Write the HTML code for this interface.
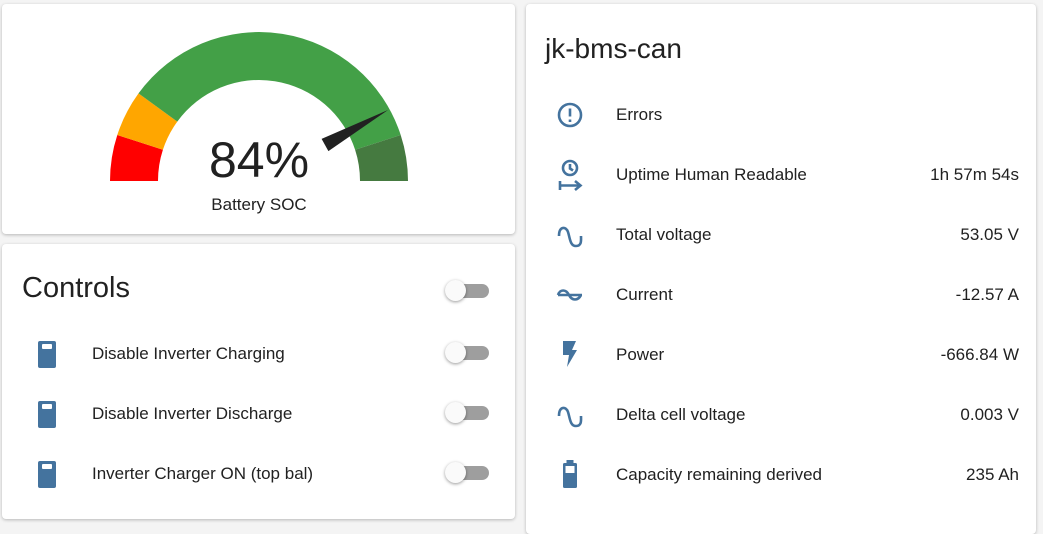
<!DOCTYPE html>
<html><head><style>
body{margin:0;width:1043px;height:523px;background:#f4f4f4;font-family:"Liberation Sans",Roboto,sans-serif;color:#212121;overflow:hidden;position:relative}
.card{position:absolute;background:#fff;border-radius:4px;box-shadow:0 1px 3px rgba(0,0,0,.25)}
.t{position:absolute;font-size:17px;white-space:nowrap}
.tog{position:absolute;width:46px;height:24px}
.tog .tr{position:absolute;left:10px;top:5px;width:34px;height:14px;border-radius:7px;background:#9e9e9e}
.tog .kn{position:absolute;left:0;top:1px;width:21px;height:21px;border-radius:50%;background:#fafafa;box-shadow:0 1px 3px rgba(0,0,0,.4)}
.r{position:absolute;right:24px;font-size:17px}
svg.i{position:absolute}
</style></head><body>
<div class="card" style="left:2px;top:4px;width:513px;height:230px"></div>
<div class="card" style="left:2px;top:244px;width:513px;height:275px"></div>
<div class="card" style="left:526px;top:4px;width:510px;height:530px"></div>
<svg style="position:absolute;left:0;top:0" width="520" height="240">
<path d="M110 181 A149 149 0 0 1 117.3 135 L162.9 149.8 A101 101 0 0 0 158 181Z" fill="#ff0000"/>
<path d="M117.3 135 A149 149 0 0 1 138.5 93.4 L177.3 121.6 A101 101 0 0 0 162.9 149.8Z" fill="#ffa600"/>
<path d="M138.5 93.4 A149 149 0 0 1 400.7 135 L355.1 149.8 A101 101 0 0 0 177.3 121.6Z" fill="#43a047"/>
<path d="M400.7 135 A149 149 0 0 1 408 181 L360 181 A101 101 0 0 0 355.1 149.8Z" fill="#457a40"/>
<path d="M388 110 L328.4 151.1 L321.6 138.9Z" fill="#212121"/>
<text x="259" y="177" text-anchor="middle" font-size="50" font-family="Liberation Sans" fill="#212121">84%</text>
<text x="259" y="210" text-anchor="middle" font-size="17" font-family="Liberation Sans" fill="#212121">Battery SOC</text>
</svg>
<div class="t" style="left:22px;top:272px;font-size:29px">Controls</div>
<div class="tog" style="left:445px;top:279px"><div class="tr"></div><div class="kn"></div></div>
<svg class="i" style="left:38px;top:341px" width="18" height="27"><rect width="18" height="27" rx="2" fill="#44739e"/><rect x="4" y="3" width="10" height="5" rx="1" fill="#fff"/></svg>
<div class="t" style="left:92px;top:344px">Disable Inverter Charging</div>
<div class="tog" style="left:445px;top:341px"><div class="tr"></div><div class="kn"></div></div>
<svg class="i" style="left:38px;top:401px" width="18" height="27"><rect width="18" height="27" rx="2" fill="#44739e"/><rect x="4" y="3" width="10" height="5" rx="1" fill="#fff"/></svg>
<div class="t" style="left:92px;top:404px">Disable Inverter Discharge</div>
<div class="tog" style="left:445px;top:401px"><div class="tr"></div><div class="kn"></div></div>
<svg class="i" style="left:38px;top:461px" width="18" height="27"><rect width="18" height="27" rx="2" fill="#44739e"/><rect x="4" y="3" width="10" height="5" rx="1" fill="#fff"/></svg>
<div class="t" style="left:92px;top:464px">Inverter Charger ON (top bal)</div>
<div class="tog" style="left:445px;top:461px"><div class="tr"></div><div class="kn"></div></div>

<div class="t" style="left:545px;top:33px;font-size:28px">jk-bms-can</div>
<svg class="i" style="left:556px;top:101px" width="28" height="28" fill="none" stroke="#44739e" stroke-width="2.6"><circle cx="14" cy="14" r="11"/><path d="M14 7.5V15.5M14 18.5V21"/></svg>
<div class="t" style="left:616px;top:105px">Errors</div>
<svg class="i" style="left:555px;top:159px" width="32" height="34" fill="none" stroke="#44739e" stroke-width="2.6"><circle cx="15" cy="9" r="7"/><path d="M15 5V9.5L18 11.5"/><path d="M5 22V31M5 26.5H25M20 22L25.5 26.5L20 31"/></svg>
<div class="t" style="left:616px;top:165px">Uptime Human Readable</div><div class="r" style="top:165px">1h 57m 54s</div>
<svg class="i" style="left:556px;top:222px" width="28" height="28" fill="none" stroke="#44739e" stroke-width="2.6"><path d="M3 14C3 4 10 4 12 10S14 24 20 24S25 18 25 14"/></svg>
<div class="t" style="left:616px;top:225px">Total voltage</div><div class="r" style="top:225px">53.05 V</div>
<svg class="i" style="left:556px;top:284px" width="28" height="22" fill="none" stroke="#44739e" stroke-width="2.6"><path d="M2 11C4 5 10 5 13 11S22 17 25 11M2 11H26"/></svg>
<div class="t" style="left:616px;top:285px">Current</div><div class="r" style="top:285px">-12.57 A</div>
<svg class="i" style="left:562px;top:340px" width="16" height="28"><path d="M1 1H14L10 10H15L5 27L7 15H1Z" fill="#44739e"/></svg>
<div class="t" style="left:616px;top:345px">Power</div><div class="r" style="top:345px">-666.84 W</div>
<svg class="i" style="left:556px;top:402px" width="28" height="28" fill="none" stroke="#44739e" stroke-width="2.6"><path d="M3 14C3 4 10 4 12 10S14 24 20 24S25 18 25 14"/></svg>
<div class="t" style="left:616px;top:405px">Delta cell voltage</div><div class="r" style="top:405px">0.003 V</div>
<svg class="i" style="left:562px;top:460px" width="16" height="28"><rect x="4.5" y="0" width="7" height="3" fill="#44739e"/><rect x="1" y="3" width="14" height="25" rx="1.5" fill="#44739e"/><rect x="3.5" y="6" width="9" height="7" fill="#fff"/></svg>
<div class="t" style="left:616px;top:465px">Capacity remaining derived</div><div class="r" style="top:465px">235 Ah</div>
</body></html>
